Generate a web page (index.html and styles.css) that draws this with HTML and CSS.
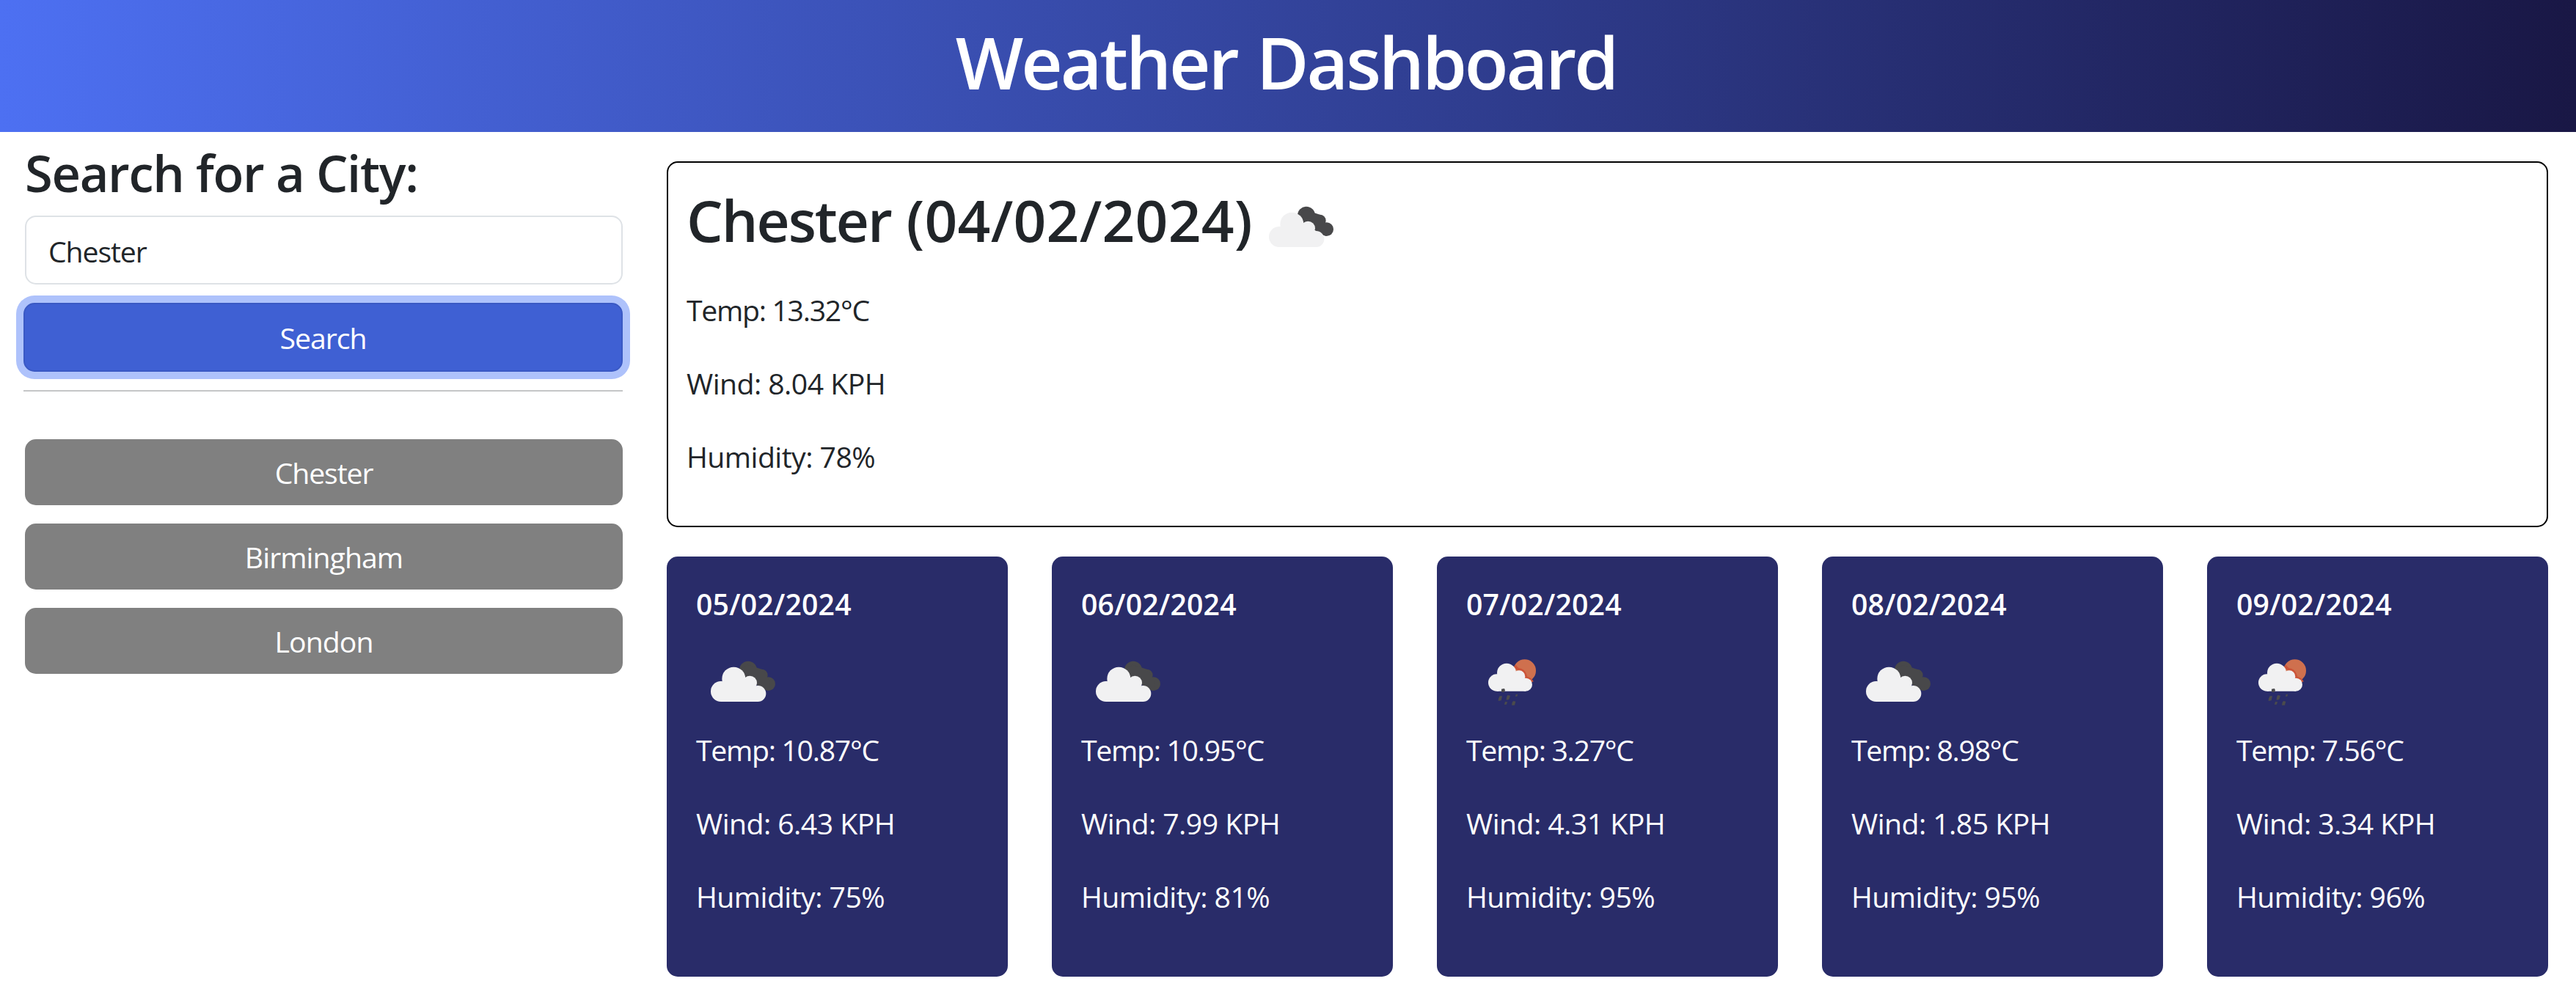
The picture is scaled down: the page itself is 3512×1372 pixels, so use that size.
FILE: index.html
```html
<!DOCTYPE html>
<html lang="en">
<head>
<meta charset="utf-8">
<title>Weather Dashboard</title>
<link rel="stylesheet" href="styles.css">
</head>
<body>
<svg class="sprite" aria-hidden="true">
  <symbol id="broken-clouds" viewBox="0 0 125 125">
    <g transform="translate(1 13) scale(.33333)">
      <g fill="#48484a">
        <circle cx="210" cy="101" r="36"/><circle cx="265" cy="123" r="25"/><circle cx="293" cy="158" r="28"/>
        <path d="M176 95 210 80 270 100 300 150 290 186 240 160 200 130z"/>
      </g>
      <g fill="#f1f1f2">
        <circle cx="151" cy="137" r="48"/><circle cx="99" cy="189" r="42"/><circle cx="217" cy="154" r="29"/><circle cx="250" cy="198" r="33"/>
        <path d="M99 231V170L130 140H200L240 170 250 231z"/>
      </g>
    </g>
  </symbol>
  <symbol id="rain-sun" viewBox="0 0 125 125">
    <g transform="translate(1 13) scale(.33333)">
      <circle cx="236" cy="104" r="46" fill="#cf704e"/>
      <path d="M196 84C205 98 210 99 220 100 236 105 240 120 243 132 258 136 264 143 268 150" fill="none" stroke="#cc5438" stroke-width="10"/>
      <g fill="#f1f1f2">
        <circle cx="162" cy="113" r="39"/><circle cx="122" cy="153" r="35"/><circle cx="213" cy="128" r="25"/><circle cx="240" cy="161" r="27"/>
        <path d="M122 188V140L140 120H200L235 150 240 188z"/>
      </g>
      <g fill="#4b4b4d">
        <path d="M141 179l12-2 3 8-5 8-10-2z"/><path d="M134 208l10 0-4 18-12 2 1-10z"/><path d="M166 204l11 2-5 16-11 2 1-12z"/>
        <path d="M200 201l8 0-3 8-7 1z"/><path d="M156 231l9 1-3 10-9 1z"/><path d="M189 228l10 2-4 15-12 0 2-10z"/>
      </g>
    </g>
  </symbol>
</svg>

<header class="header"><h1 class="title">Weather Dashboard</h1></header>

<div class="layout">
  <aside class="sidebar">
    <h3 class="search-title">Search for a City:</h3>
    <form class="search-form">
      <input class="search-input" type="text" value="Chester">
      <button class="search-button" type="button">Search</button>
    </form>
    <hr class="divider">
    <div class="history">
      <button class="history-button short">Chester</button>
      <button class="history-button">Birmingham</button>
      <button class="history-button">London</button>
    </div>
  </aside>

  <main class="main">
    <section class="today">
      <div class="today-head">
        <h2 class="today-title"><span class="today-city">Chester</span> (04/02/2024)</h2>
        <svg class="icon"><use href="#broken-clouds"/></svg>
      </div>
      <div class="readings">
        <p class="temp">Temp: 13.32°C</p>
        <p>Wind: 8.04 KPH</p>
        <p>Humidity: 78%</p>
      </div>
    </section>

    <section class="forecast">
      <article class="card">
        <h5 class="date">05/02/2024</h5>
        <svg class="icon"><use href="#broken-clouds"/></svg>
        <div class="readings"><p class="temp">Temp: 10.87°C</p><p>Wind: 6.43 KPH</p><p>Humidity: 75%</p></div>
      </article>
      <article class="card">
        <h5 class="date">06/02/2024</h5>
        <svg class="icon"><use href="#broken-clouds"/></svg>
        <div class="readings"><p class="temp">Temp: 10.95°C</p><p>Wind: 7.99 KPH</p><p>Humidity: 81%</p></div>
      </article>
      <article class="card">
        <h5 class="date">07/02/2024</h5>
        <svg class="icon"><use href="#rain-sun"/></svg>
        <div class="readings"><p class="temp">Temp: 3.27°C</p><p>Wind: 4.31 KPH</p><p>Humidity: 95%</p></div>
      </article>
      <article class="card">
        <h5 class="date">08/02/2024</h5>
        <svg class="icon"><use href="#broken-clouds"/></svg>
        <div class="readings"><p class="temp">Temp: 8.98°C</p><p>Wind: 1.85 KPH</p><p>Humidity: 95%</p></div>
      </article>
      <article class="card">
        <h5 class="date">09/02/2024</h5>
        <svg class="icon"><use href="#rain-sun"/></svg>
        <div class="readings"><p class="temp">Temp: 7.56°C</p><p>Wind: 3.34 KPH</p><p>Humidity: 96%</p></div>
      </article>
    </section>
  </main>
</div>
</body>
</html>
```
FILE: styles.css
```css
* { box-sizing: border-box; }

body {
  margin: 0;
  background: #fff;
  color: #212529;
  font: 400 39.2px/60px "Segoe UI", "Open Sans", "Noto Sans", sans-serif;
  letter-spacing: -0.55px;
}

h1, h2, h3, h5, p { margin: 0; }
h1, h2, h3, h5 { font-weight: 600; white-space: nowrap; }

.sprite { display: none; }

.header {
  height: 180px;
  padding: 24px 5px 0 0;
  background: linear-gradient(to right, #4d70f2, #191745);
  color: #fff;
  text-align: center;
}
.title { font-size: 98px; line-height: 120px; letter-spacing: -3.15px; word-spacing: 4px; }

.layout {
  display: grid;
  grid-template-columns: 817px 2565px;
  column-gap: 60px;
  padding-left: 32px;
}

.sidebar { padding-top: 14px; }
.search-title {
  padding-left: 2px;
  font-size: 68.6px;
  line-height: 84px;
  letter-spacing: -1.3px;
}
.search-form { display: flex; flex-direction: column; gap: 25px; margin-top: 16px; }
.search-input {
  height: 94px;
  margin-left: 2px;
  padding: 2px 30px 0;
  border: 2px solid #dee2e6;
  border-radius: 15px;
  background: #fff;
  color: #212529;
  font: inherit;
  letter-spacing: -1.1px;
}
.search-button {
  height: 94px;
  padding: 2px 0 0;
  border: 2px solid #3a59c4;
  border-radius: 15px;
  background: #3f60d3;
  box-shadow: 0 0 0 10px #aec2fb;
  color: #fff;
  font: inherit;
  letter-spacing: -1px;
}
.divider { height: 2px; margin: 25px 0 65px; border: 0; background: #c5c6c7; }
.history { display: flex; flex-direction: column; gap: 25px; padding-left: 2px; }
.history-button {
  height: 90px;
  padding: 2px 0 0;
  border: 0;
  border-radius: 15px;
  background: #808080;
  color: #fff;
  font: inherit;
  letter-spacing: -0.95px;
}
.short { letter-spacing: -1.1px; }

.main { padding-top: 40px; }
.today {
  height: 499px;
  padding: 25px 25px 0;
  border: 2px solid #000;
  border-radius: 15px;
}
.today-head { display: flex; gap: 4px; height: 125px; }
.today-title {
  width: 770px;
  padding-top: 5px;
  font-size: 78.4px;
  line-height: 96px;
  letter-spacing: 0.25px;
}
.today-city { letter-spacing: -2px; }
.today .readings { margin-top: 21px; }

.icon { display: block; flex: none; width: 125px; height: 125px; }

.readings { display: flex; flex-direction: column; gap: 40px; }
.temp { letter-spacing: -1.3px; }

.forecast {
  display: grid;
  grid-template-columns: repeat(5, 465px);
  gap: 60px;
  margin-top: 40px;
}
.card {
  height: 573px;
  padding: 35px 40px 0;
  border-radius: 15px;
  background: #292c69;
  color: #fff;
}
.date { margin-bottom: 13px; font-size: 39.2px; line-height: 60px; letter-spacing: 0.2px; }
.card .readings { margin-top: 1px; }
```
